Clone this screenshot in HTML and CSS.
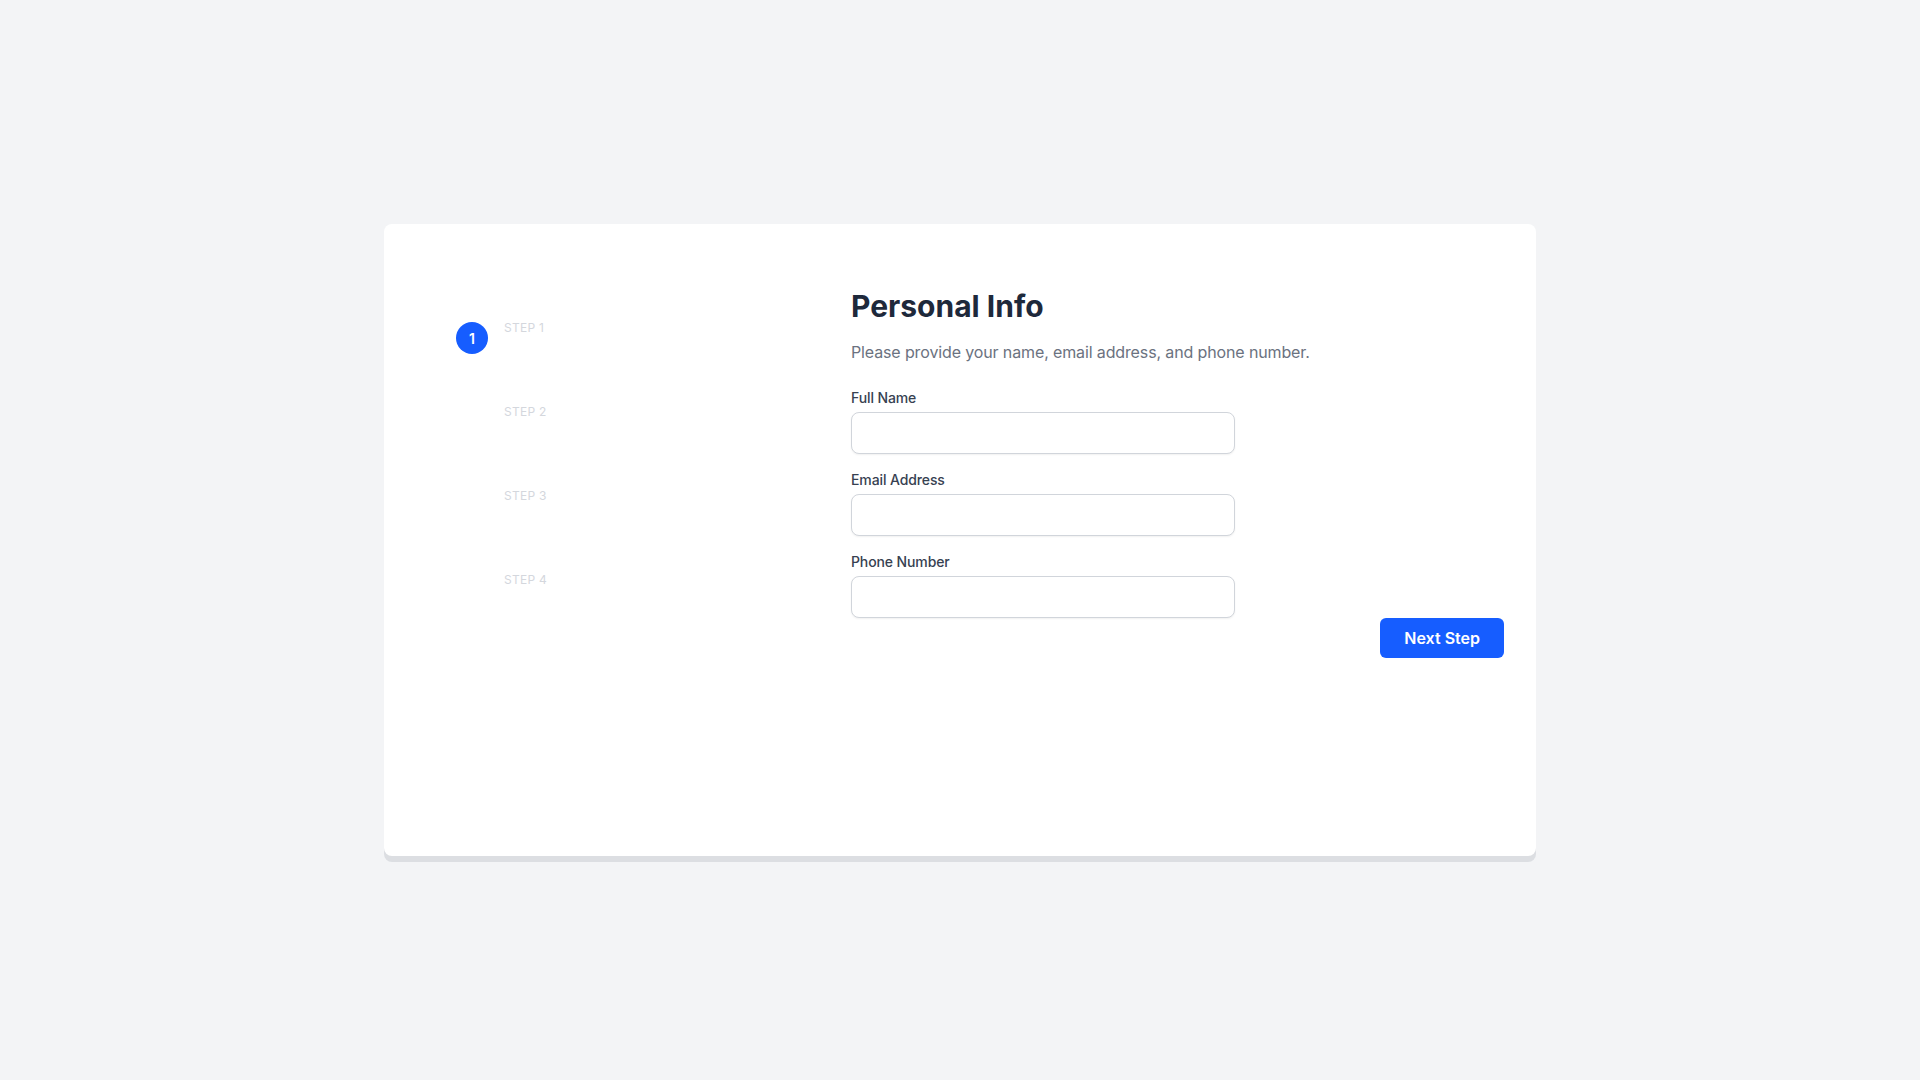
FILE: index.html
```html
<!DOCTYPE html>
<html lang="en">
<head>
    <meta charset="UTF-8">
    <meta name="viewport" content="width=device-width, initial-scale=1.0">
    <title>Personal Info</title>
    <link rel="stylesheet" href="styles.css">
</head>
<body>
    <div class="container">
        <div class="card">
            <aside class="steps">
                <div class="step active">
                    <span class="step-num">1</span>
                    <span class="step-label">Step 1</span>
                </div>
                <div class="step">
                    <span class="step-num">2</span>
                    <span class="step-label">Step 2</span>
                </div>
                <div class="step">
                    <span class="step-num">3</span>
                    <span class="step-label">Step 3</span>
                </div>
                <div class="step">
                    <span class="step-num">4</span>
                    <span class="step-label">Step 4</span>
                </div>
            </aside>
            <main class="card-body">
                <h1>Personal Info</h1>
                <p class="subtitle">Please provide your name, email address, and phone number.</p>
                <form>
                    <div class="form-field">
                        <label for="fullName">Full Name</label>
                        <input type="text" id="fullName">
                    </div>
                    <div class="form-field">
                        <label for="email">Email Address</label>
                        <input type="email" id="email">
                    </div>
                    <div class="form-field">
                        <label for="phone">Phone Number</label>
                        <input type="tel" id="phone">
                    </div>
                    <div class="buttons">
                        <button type="submit" class="btn">Next Step</button>
                    </div>
                </form>
            </main>
        </div>
    </div>
</body>
</html>
```

FILE: styles.css
```css
*{
    box-sizing: border-box;
    margin: 0;
    padding: 0;
}
body{
    font-family: Inter, "Noto Sans", sans-serif;
    background-color: #f3f4f6;
}
.container{
    width: 100%;
    height: 100vh;
    display: flex;
    justify-content: center;
    align-items: center;
}
.card{
    width: 1152px;
    height: 632px;
    background-color: #fff;
    border-radius: 8px;
    box-shadow: 0 6px 0 #dcdee2;
    padding: 64px 32px 32px 72px;
    display: grid;
    grid-template-columns: 395px 1fr;
}
/* left stepper */
.steps{
    padding-top: 34px;
    display: flex;
    flex-direction: column;
    gap: 52px;
}
.step{
    display: flex;
    align-items: flex-start;
    gap: 16px;
}
.step-num{
    width: 32px;
    height: 32px;
    border-radius: 50%;
    display: flex;
    justify-content: center;
    align-items: center;
    font-size: 14px;
    font-weight: 600;
    color: #fff;
    background-color: #fff;
}
.step.active .step-num{
    background-color: #165dff;
}
.step-label{
    font-size: 12px;
    line-height: 12px;
    text-transform: uppercase;
    letter-spacing: 0.02em;
    color: #d4d7dd;
}
/* right form */
h1{
    font-size: 30px;
    line-height: 36px;
    font-weight: 700;
    color: #1e293b;
}
.subtitle{
    margin-top: 16px;
    font-size: 16px;
    line-height: 24px;
    color: #6b7280;
    letter-spacing: -0.008em;
}
form{
    margin-top: 24px;
}
.form-field{
    margin-bottom: 16px;
}
.form-field:nth-last-child(2){
    margin-bottom: 0;
}
label{
    display: block;
    font-size: 14px;
    line-height: 20px;
    font-weight: 500;
    color: #374151;
    margin-bottom: 4px;
    letter-spacing: -0.008em;
}
input{
    display: block;
    width: 384px;
    height: 42px;
    border: 1px solid #d1d5db;
    border-radius: 8px;
    box-shadow: 0 1px 2px rgba(0, 0, 0, 0.06);
    padding: 0 12px;
    font-family: inherit;
    font-size: 14px;
    outline: none;
}
.buttons{
    display: flex;
    justify-content: flex-end;
}
.btn{
    height: 40px;
    padding: 0 24px;
    border: none;
    border-radius: 6px;
    background-color: #165dff;
    color: #fff;
    font-family: inherit;
    font-size: 16px;
    font-weight: 600;
    cursor: pointer;
}
```
